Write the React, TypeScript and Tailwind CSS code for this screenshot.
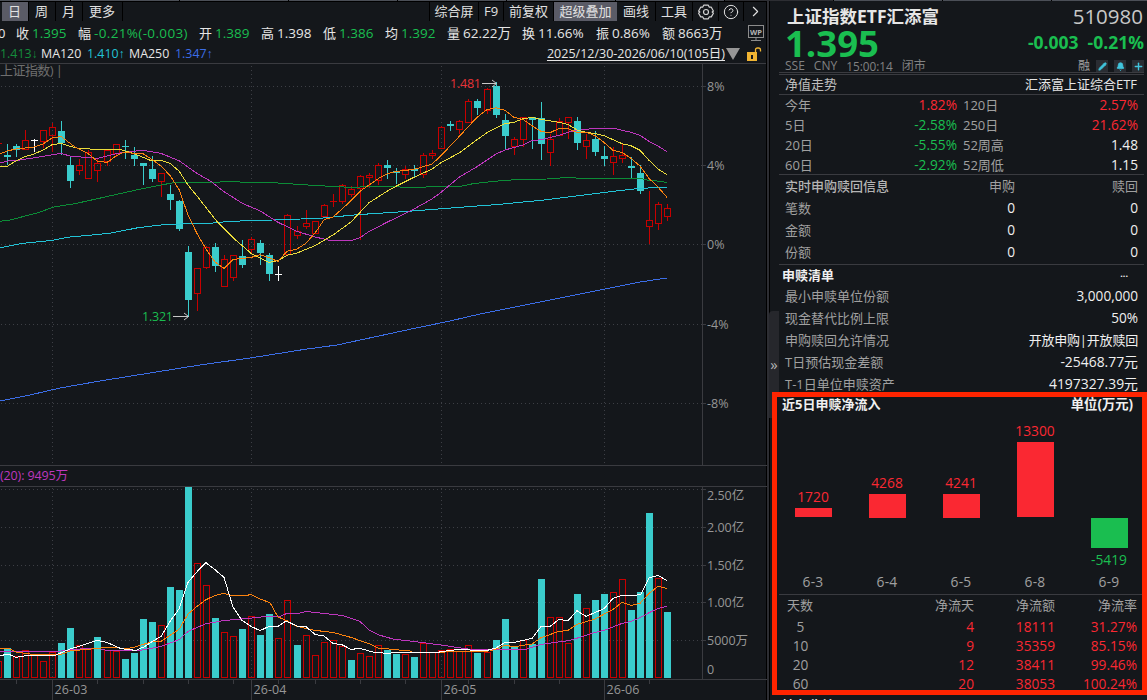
import React from 'react';
import { Bell, ChevronRight, CircleHelp, Pencil, Plus } from 'lucide-react';

type Tone = 'c' | 'r' | 'w';

// [high, body top, body bottom, low, tone, volume top, volume tone]
type Bar = [number, number, number, number, Tone, number, Tone];

const BARS: Bar[] = [
    [144, 155, 157, 165, 'c', 648, 'c'],
    [144, 146, 150, 157, 'c', 656, 'r'],
    [130, 140, 150, 150, 'r', 650, 'r'],
    [139, 140, 141, 152, 'w', 654, 'r'],
    [130, 130, 142, 148, 'r', 661, 'r'],
    [123, 127, 136, 152, 'r', 652, 'r'],
    [121, 131, 143, 155, 'c', 643, 'c'],
    [157, 165, 181, 188, 'c', 628, 'c'],
    [159, 165, 171, 175, 'r', 645, 'r'],
    [150, 152, 179, 179, 'r', 649, 'r'],
    [158, 163, 171, 182, 'r', 637, 'c'],
    [150, 150, 162, 166, 'r', 650, 'r'],
    [144, 144, 154, 157, 'r', 651, 'r'],
    [140, 146, 147, 159, 'c', 659, 'c'],
    [147, 155, 159, 166, 'c', 653, 'c'],
    [163, 163, 166, 185, 'c', 619, 'c'],
    [156, 169, 179, 182, 'c', 622, 'c'],
    [173, 173, 182, 197, 'r', 625, 'r'],
    [185, 194, 200, 210, 'c', 587, 'c'],
    [200, 201, 229, 231, 'c', 590, 'c'],
    [246, 252, 300, 317, 'c', 487, 'c'],
    [268, 268, 294, 311, 'r', 563, 'r'],
    [246, 247, 268, 269, 'r', 585, 'r'],
    [243, 247, 266, 272, 'c', 618, 'c'],
    [255, 259, 287, 287, 'r', 632, 'r'],
    [255, 255, 278, 281, 'r', 636, 'r'],
    [240, 256, 265, 268, 'c', 629, 'c'],
    [237, 239, 250, 254, 'r', 616, 'r'],
    [240, 243, 253, 265, 'c', 635, 'c'],
    [253, 255, 274, 281, 'c', 614, 'c'],
    [266, 274, 275, 281, 'w', 638, 'r'],
    [214, 215, 255, 256, 'r', 600, 'r'],
    [226, 231, 236, 239, 'r', 645, 'c'],
    [210, 223, 227, 229, 'r', 635, 'r'],
    [221, 221, 234, 234, 'r', 655, 'r'],
    [204, 205, 217, 218, 'r', 642, 'r'],
    [194, 201, 202, 207, 'r', 640, 'r'],
    [184, 185, 202, 204, 'r', 646, 'r'],
    [186, 189, 195, 197, 'r', 660, 'c'],
    [175, 176, 189, 240, 'r', 653, 'r'],
    [173, 175, 178, 188, 'r', 656, 'r'],
    [163, 165, 181, 185, 'r', 645, 'r'],
    [160, 165, 168, 179, 'c', 650, 'c'],
    [168, 171, 173, 184, 'c', 654, 'c'],
    [166, 169, 175, 179, 'r', 654, 'r'],
    [165, 169, 171, 177, 'c', 657, 'c'],
    [153, 155, 175, 178, 'r', 643, 'r'],
    [150, 153, 156, 159, 'r', 652, 'r'],
    [126, 127, 149, 149, 'r', 650, 'r'],
    [121, 124, 126, 131, 'c', 649, 'r'],
    [120, 121, 130, 134, 'r', 651, 'r'],
    [99, 101, 123, 123, 'r', 645, 'r'],
    [99, 101, 108, 115, 'c', 653, 'c'],
    [88, 89, 111, 114, 'r', 652, 'r'],
    [82, 86, 115, 118, 'c', 640, 'c'],
    [114, 120, 136, 150, 'c', 619, 'c'],
    [137, 139, 147, 155, 'r', 646, 'c'],
    [117, 117, 140, 147, 'r', 640, 'r'],
    [117, 117, 120, 149, 'c', 644, 'c'],
    [102, 118, 144, 160, 'c', 579, 'c'],
    [134, 139, 153, 166, 'r', 617, 'r'],
    [118, 121, 136, 136, 'r', 617, 'r'],
    [117, 117, 123, 139, 'r', 643, 'r'],
    [117, 121, 143, 150, 'c', 594, 'c'],
    [134, 140, 147, 159, 'r', 608, 'r'],
    [131, 139, 152, 156, 'c', 600, 'c'],
    [146, 156, 159, 166, 'c', 594, 'c'],
    [147, 156, 163, 175, 'r', 592, 'r'],
    [144, 155, 159, 163, 'r', 579, 'r'],
    [157, 166, 168, 178, 'c', 610, 'c'],
    [165, 173, 191, 194, 'c', 592, 'c'],
    [191, 220, 227, 244, 'r', 513, 'c'],
    [202, 204, 224, 230, 'r', 578, 'r'],
    [204, 208, 217, 221, 'r', 612, 'c'],
];

const TONES: Record<Tone, string> = { c: '#3acccc', r: '#c80000', w: '#ffffff' };

// the bar pitch is slightly over 9px, so a pixel is added every 21 bars
const barX = (i: number) => 4 + i * 9 + (i > 10 ? 1 : 0) + (i > 31 ? 1 : 0) + (i > 52 ? 1 : 0);

const LINES = [
    { color: '#3c6ee6', points: '0,401 30,395 60,388 100,381 150,373 200,365 250,358 305,349.3 337,345 410,329.3 450,321 480,314 540,302 600,290 640,282 667,278' },
    { color: '#22c3d6', points: '0,247.7 23,243.3 53,240.3 67,237.3 110,233.3 138,227.7 167,224.3 210,223.3 230,221.3 273,220 320,218.3 357,214.7 403,211.7 447,208.3 500,204.3 547,199.7 580,195.5 610,191.7 640,188.3 667,187.3' },
    { color: '#0c8c37', points: '0,221.3 10,220 37,213 55,206.7 75,203.7 143,188.5 175,182.4 213,182.4 225,181.7 273,182.7 312,185.3 350,187.3 380,186.4 410,187.3 460,186.4 473,183.7 493,181.4 519,179.4 547,179 567,177.5 582,178.4 640,178.4 649,180.4 662,181.4 667,182.7' },
    { color: '#be37be', points: '0,163 8,161 20,160 43,156.4 61,153.4 70,156 97,158.4 116,153.7 125,152 143,150.4 161,153.4 179,160.7 197,173.4 211,181.4 224,191.7 243,203.7 260,210.8 278,222.3 297,231.3 315,237 330,240.4 352,240.4 360,237.7 369,231.4 387,222.3 413,209.5 432,199 441,192.3 459,177.3 477,166.7 496,154 505,150 523,145 532,140.7 541,139.7 559,135.3 568,132.3 577,130.5 592,128.6 615,128.6 631,132.3 640,135.3 649,141.3 658,146 667,151.7' },
    { color: '#ebdc3c', points: '0,166.4 7,166.4 16,161 25,156.7 34,154 43,150 52,144.7 61,143.4 70,146.3 79,148.4 97,149.4 120,149.4 134,153.7 152,161 161,160.4 170,163.4 179,171 188,185 197,196 216,220.3 233,237.7 251,253.3 260,258 269,262.3 278,260.7 287,255.3 297,253 315,245.7 333,235 351,222 369,202.7 387,191.3 396,186.3 414,177.3 432,169 441,162.7 459,153 477,139.7 487,132.7 496,128 505,123.7 514,122.3 523,118.7 532,117.4 541,119.4 559,122.3 568,124.5 577,130 586,132.4 595,133.4 604,135.7 622,143.7 631,145.7 640,150.3 649,160.3 658,169 667,174.7' },
    { color: '#fa820f', points: '0,154 7,151 16,149 34,147 43,144 52,138 61,136.5 75,147 88,153.5 97,161 107,162.4 116,156 124,152 134,153.5 143,153.7 152,159.5 161,166 170,175.5 179,189.5 188,215 197,233.5 206,249 215,262 224,268.4 233,259.5 251,257.5 260,254.7 269,257.7 278,261.4 287,251.3 297,249 306,243.3 316,231.7 324,219.7 333,217 342,209 351,200.7 360,191.3 369,185 380,177.5 387,174 396,171.4 414,169.4 432,164 441,155.7 459,136.7 477,117.3 487,109.7 496,107.7 505,110.4 514,117.3 523,119.4 532,125.7 541,131.4 550,132.7 559,128.4 568,128.5 577,132.6 586,132.2 595,135.7 604,142.4 613,150.3 622,152.4 631,158.4 640,166 649,178.4 658,187 667,197.4' },
    // volume averages
    { color: '#be37be', points: '0,651.4 57,651.4 80,649 98,648.4 107,650.4 137,651 161,646.4 179,639.7 188,631.4 206,623.7 223,620.7 250,618.2 270,616 280,616.4 287,613.4 300,613 306,611.4 342,615.4 360,621.4 369,630 378,634.7 393,639 426,643 446,645.7 470,649.4 526,649.4 541,644.4 570,640.4 595,632.4 606,629.7 622,623.4 631,621.4 640,617.7 649,612.7 658,608.4 667,606.4' },
    { color: '#fa820f', points: '0,648.4 9,648.4 16,652 33,654.4 61,654.4 70,651 97,648.4 107,647.4 127,648.4 134,647.4 143,644.4 152,642 161,641.4 179,629.4 188,614 197,606.4 206,599.7 215,595.4 224,593.4 232,595.4 247,595.4 251,594.4 260,599 270,602.7 278,617 287,620.7 297,626.4 315,630.4 333,632.4 351,637.4 369,643.7 378,648 410,651 413,652.4 443,652.4 447,651.4 490,651 498,648.4 505,645.3 514,646.7 532,644 541,637.7 559,631.4 568,630.4 577,624.4 595,619 613,609.4 622,602.4 631,605.4 640,603.4 649,593.4 658,586.4 667,588.4' },
    { color: '#ffffff', points: '0,655.4 9,654.4 16,657.4 27,655.4 55,655.4 70,649 79,646.4 97,640.4 107,642.4 121,648.7 136,650.4 145,646.4 152,641.7 161,636.4 170,621.4 179,609 188,582.4 197,571.7 206,562.7 215,569.7 224,577.4 233,607 242,620.4 251,626.4 260,630.6 269,626.4 278,626.4 286,621 297,626 306,626.7 315,634.4 324,636 333,643.4 342,644.7 351,649.4 360,648.4 373,652 387,653.4 397,652.4 437,652.4 450,650.4 463,649 473,650.4 487,650.4 496,648 505,642.4 514,642.4 523,640.4 532,638.4 541,626.4 550,626.4 559,619.4 568,620.7 577,610.7 586,616.4 604,608.7 613,598.4 622,595.4 636,595.4 641,594 649,578 658,575.4 667,580.7' },
];

const H_GRID = [86.5, 165.5, 244.5, 324.5, 403.5, 489.5, 527.5, 565.5, 602.5, 640.5];
const MONTHS = [
    { x: 52.5, label: '26-03' },
    { x: 251.5, label: '26-04' },
    { x: 441.5, label: '26-05' },
    { x: 604.5, label: '26-06' },
];
const TICKS = [16.5, 97.5, 143.5, 188.5, 233.5, 278.5, 315.5, 360.5, 405.5, 468.5, 514.5, 559.5, 649.5];
const Y_LABELS: [number, string][] = [
    [91, '8%'],
    [170, '4%'],
    [249, '0%'],
    [329, '-4%'],
    [408, '-8%'],
    [500, '2.50亿'],
    [532, '2.00亿'],
    [570, '1.50亿'],
    [607, '1.00亿'],
    [645, '5000万'],
    [674, '0'],
];

const Chart: React.FC = () => (
    <svg width="767" height="636" viewBox="0 64 767 636" className="block text-[12.5px]">
        <g stroke="#3d3f45" strokeDasharray="1 3" shapeRendering="crispEdges">
            {H_GRID.map((y) => (
                <line key={y} x1="1" x2="702" y1={y} y2={y} />
            ))}
            {MONTHS.map((m) => (
                <React.Fragment key={m.x}>
                    <line x1={m.x} x2={m.x} y1="66" y2="465" />
                    <line x1={m.x} x2={m.x} y1="488" y2="679" />
                </React.Fragment>
            ))}
        </g>
        <g stroke="#3a3b40" shapeRendering="crispEdges">
            <path d="M0 465.5H767M0 486.5H767M0 679.5H767M702.5 64V465M702.5 487V679" />
            {H_GRID.map((y) => (
                <line key={y} x1="702" x2="706" y1={y} y2={y} />
            ))}
            {MONTHS.map((m) => (
                <line key={m.x} x1={m.x} x2={m.x} y1="680" y2="700" />
            ))}
            {TICKS.map((x) => (
                <line key={x} x1={x} x2={x} y1="680" y2="684" />
            ))}
        </g>

        <g shapeRendering="crispEdges">
            <rect x="-5.5" y="661.5" width="7" height="16" fill="none" stroke="#c80000" />
            <rect x="0" y="143" width="2" height="1" fill="#c80000" />
            {BARS.map(([hi, top, bottom, lo, tone, vol, volTone], i) => {
                const x = barX(i);
                const hollow = tone === 'r' && bottom - top > 1;
                return (
                    <g key={i}>
                        {hollow ? (
                            <>
                                <rect x={x + 3} y={hi} width="1" height={top - hi} fill={TONES.r} />
                                <rect x={x + 3} y={bottom} width="1" height={lo - bottom} fill={TONES.r} />
                                <rect x={x + 0.5} y={top + 0.5} width="6" height={bottom - top - 1} fill="none" stroke={TONES.r} />
                            </>
                        ) : (
                            <>
                                <rect x={x + 3} y={hi} width="1" height={lo - hi} fill={TONES[tone]} />
                                <rect x={x} y={top} width="7" height={bottom - top} fill={TONES[tone]} />
                            </>
                        )}
                        {volTone === 'c' ? (
                            <rect x={x} y={vol} width="7" height={678 - vol} fill={TONES.c} />
                        ) : (
                            <rect x={x + 0.5} y={vol + 0.5} width="6" height={677 - vol} fill="none" stroke={TONES.r} />
                        )}
                    </g>
                );
            })}
            {LINES.map((line, i) => (
                <polyline key={i} points={line.points} fill="none" stroke={line.color} strokeWidth="1" />
            ))}
        </g>

        <path d="M173 316.5H188M184 313L188.5 316.5L184 320M482 83.5H496M492 80L496.5 83.5L492 87" fill="none" stroke="#c8c8c8" />
        <text x="142" y="321" textLength="31" fill="#1abe50">1.321</text>
        <text x="450" y="88" textLength="31" fill="#e63237">1.481</text>

        <rect x="0" y="64" width="66" height="13" fill="#14171b" />
        <text x="0" y="75" textLength="63" fontSize="13" fill="#6e6e6e">上证指数) |</text>
        <text x="0" y="480" textLength="68" fill="#be37be">(20): 9495万</text>
        {Y_LABELS.map(([y, label]) => (
            <text key={label} x="707" y={y} fill="#969696">{label}</text>
        ))}
        {MONTHS.map((m) => (
            <text key={m.x} x={m.x + 2} y="694" textLength="33" fill="#969696">{m.label}</text>
        ))}
    </svg>
);

const GearIcon: React.FC = () => (
    <svg width="16" height="16" viewBox="0 0 16 16" fill="none" stroke="#d2d2d2" strokeWidth="1.2" strokeLinejoin="round">
        <path d="M5.7 1.2H10.3L11.2 3.1L13.3 3.2L15.4 7L14.2 8L15.4 9.2L13.3 12.9L11.2 12.9L10.3 14.8H5.7L4.8 12.9L2.7 12.9L.6 9.2L1.8 8L.6 7L2.7 3.2L4.8 3.1Z" />
        <circle cx="8" cy="8" r="2.5" />
    </svg>
);

const Toolbar: React.FC = () => (
    <div className="flex h-[21px] justify-between border-t border-black pb-px leading-[19px] text-[#e1e1e1]">
        <div className="flex pl-[2px]">
            <span className="w-[27px] border-r border-black bg-[#5a5b66] pl-[6px]">日</span>
            <span className="w-[27px] border-r border-black pl-[6px]">周</span>
            <span className="w-[27px] border-r border-black pl-[6px]">月</span>
            <span className="w-[40px] border-r border-black pl-[6px]">更多</span>
        </div>
        <div className="flex text-center">
            <span className="w-[50px] border-x border-black">综合屏</span>
            <span className="w-[25px] border-r border-black">F9</span>
            <span className="w-[50px] border-r border-black">前复权</span>
            <span className="w-[63px] bg-[#5a5b66]">超级叠加</span>
            <span className="w-[39px] border-r border-black">画线</span>
            <span className="w-[37px] border-r border-black">工具</span>
            <span className="flex w-[26px] items-center justify-center border-r border-black"><GearIcon /></span>
            <span className="flex w-[25px] items-center justify-center border-r border-black">
                <CircleHelp size={16} strokeWidth={1.5} />
            </span>
            <span className="flex w-[22px] items-center justify-center">
                <ChevronRight size={17} strokeWidth={1.6} />
            </span>
        </div>
    </div>
);

const QUOTES = [
    { label: '收', value: '1.395', width: 'w-[62px]', color: 'text-[#1abe50]' },
    { label: '幅', value: '-0.21%(-0.003)', width: 'w-[121px]', color: 'text-[#1abe50] tracking-[0.35px]' },
    { label: '开', value: '1.389', width: 'w-[62px]', color: 'text-[#1abe50]' },
    { label: '高', value: '1.398', width: 'w-[62px]', color: '' },
    { label: '低', value: '1.386', width: 'w-[62px]', color: 'text-[#1abe50]' },
    { label: '均', value: '1.392', width: 'w-[62px]', color: 'text-[#1abe50]' },
    { label: '量', value: '62.22万', width: 'w-[75px]', color: '' },
    { label: '换', value: '11.66%', width: 'w-[74px]', color: '' },
    { label: '振', value: '0.86%', width: 'w-[66px]', color: '' },
    { label: '额', value: '8663万', width: 'w-[70px]', color: '' },
];

const QuoteRow: React.FC = () => (
    <div className="flex h-[22px] items-center pt-px whitespace-nowrap text-[#e6e6e6]">
        <span className="w-[16px] shrink-0 -indent-[2px]">0</span>
        {QUOTES.map((q) => (
            <div key={q.label} className={`flex shrink-0 items-center gap-[3px] ${q.width}`}>
                <span>{q.label}</span>
                <span className={`text-[13.5px] ${q.color}`}>{q.value}</span>
            </div>
        ))}
        <svg width="17" height="17" viewBox="0 0 17 17" className="ml-4 shrink-0" fill="none" stroke="#8c8c8c">
            <rect x="0.5" y="0.5" width="15" height="12" />
            <path d="M8 13V15M3 15.5H13" />
            <text x="2" y="9.5" textLength="12" fontSize="7.5" fontWeight="700" fill="#b4b4b4" stroke="none">WP</text>
        </svg>
    </div>
);

const Arrow: React.FC<{ children: string }> = ({ children }) => (
    <span className="font-['Liberation_Sans',sans-serif] text-[12px]">{children}</span>
);

const AverageRow: React.FC = () => (
    <div className="flex h-[20px] items-center justify-between border-b border-[#3a3b40] pt-px pr-[4px] text-[12.4px] whitespace-nowrap">
        <div className="flex">
            <span className="w-[41px] text-[#148c3c]">1.413<Arrow>↓</Arrow></span>
            <span className="w-[46px] text-[#e6e6e6]">MA120</span>
            <span className="w-[42px] text-[#22c3d6]">1.410<Arrow>↑</Arrow></span>
            <span className="w-[46px] text-[#e6e6e6]">MA250</span>
            <span className="text-[#3c6ee6]">1.347<Arrow>↑</Arrow></span>
        </div>
        <div className="flex items-center">
            <span className="text-[12.5px] text-[#e6e6e6] underline underline-offset-2">2025/12/30-2026/06/10(105日)</span>
            <svg width="15" height="12" viewBox="0 0 15 12" fill="#969696">
                <path d="M1 0H15L8 12Z" />
            </svg>
            <svg width="16" height="15" viewBox="0 0 16 15" className="ml-[6px]">
                <rect x="1" y="5" width="10" height="9" fill="#f0b432" />
                <path d="M9.5 5V3Q9.5 1 11.5 1H12.5Q14.5 1 14.5 3V4.5" fill="none" stroke="#f0b432" strokeWidth="1.3" />
                <rect x="5" y="8" width="2" height="4" fill="#14171b" />
            </svg>
        </div>
    </div>
);

const PERFORMANCE = [
    ['今年', '1.82%', '120日', '2.57%'],
    ['5日', '-2.58%', '250日', '21.62%'],
    ['20日', '-5.55%', '52周高', '1.48'],
    ['60日', '-2.92%', '52周低', '1.15'],
];

const valueColor = (value: string) => {
    if (!value.endsWith('%')) return 'text-[#f0f0f0]';
    return value.startsWith('-') ? 'text-[#1abe50]' : 'text-[#fa2832]';
};

const LIST = [
    { label: '最小申赎单位份额', value: '3,000,000', size: 'text-[13.6px]' },
    { label: '现金替代比例上限', value: '50%', size: 'text-[13.6px]' },
    { label: '申购赎回允许情况', value: '开放申购|开放赎回', size: 'text-[13px] tracking-[-0.2px]' },
    { label: 'T日预估现金差额', value: '-25468.77元', size: 'text-[13.9px]' },
    { label: 'T-1日单位申赎资产', value: '4197327.39元', size: 'text-[13.9px]' },
];

const SecurityHeader: React.FC = () => (
    <div className="h-[70px] border-b border-[#3a3b40] pl-[6px]">
        <div className="flex h-[26px] items-center justify-between pr-px pl-[2px]">
            <span className="text-[17.5px] font-bold text-[#e6e6e6]">上证指数ETF汇添富</span>
            <span className="text-[20.5px] text-[#c8c8c8]">510980</span>
        </div>
        <div className="flex h-[29px] items-start justify-between text-[#1abe50]">
            <span className="text-[36.5px] leading-[28px] font-bold">1.395</span>
            <span className="flex gap-[9px] text-[17.5px] leading-[26px] font-bold">
                <span>-0.003</span>
                <span>-0.21%</span>
            </span>
        </div>
        <div className="flex h-[15px] items-center justify-between pt-px text-xs leading-[14px] text-[#828282]">
            <div className="flex gap-[9px]">
                <span>SSE</span>
                <span>CNY</span>
                <span className="text-[11.8px]">15:00:14</span>
                <span>闭市</span>
            </div>
            <div className="flex items-center gap-[6px] text-[#40c4dc]">
                <span className="text-[#a0a0a0]">融</span>
                <span className="flex size-3 items-center justify-center bg-[#2a2d33]"><Pencil size={9} fill="currentColor" /></span>
                <span className="flex size-3 items-center justify-center bg-[#2a2d33]"><Bell size={9} fill="currentColor" /></span>
                <span className="flex size-3 items-center justify-center bg-[#2a2d33]"><Plus size={11} strokeWidth={3} /></span>
            </div>
        </div>
    </div>
);

const FLOWS = [
    { date: '6-3', value: 1720, top: 'pt-[76px]', height: 'h-[9px]' },
    { date: '6-4', value: 4268, top: 'pt-[62px]', height: 'h-[24px]' },
    { date: '6-5', value: 4241, top: 'pt-[62px]', height: 'h-[24px]' },
    { date: '6-8', value: 13300, top: 'pt-[10px]', height: 'h-[75px]' },
    { date: '6-9', value: -5419, top: 'pt-[105px]', height: 'h-[30px]' },
];

const FLOW_TABLE = [
    ['5', '4', '18111', '31.27%'],
    ['10', '9', '35359', '85.15%'],
    ['20', '12', '38411', '99.46%'],
    ['60', '20', '38053', '100.24%'],
];

const NetFlow: React.FC = () => (
    <section className="relative -ml-[7px] h-[303px] w-[375px] shrink-0 border-[5px] border-[#ff2400] bg-[#14171b]">
        <div className="flex h-[16px] items-center justify-between pr-[9px] pl-[5px] font-bold text-[#f0f0f0]">
            <span>近5日申赎净流入</span>
            <span className="text-[13.3px]">单位(万元)</span>
        </div>
        <div className="flex h-[161px] gap-[16px] pl-[7px]">
            {FLOWS.map((f) => (
                <div key={f.date} className={`flex w-[58px] flex-col items-center text-[13.8px] leading-[16px] ${f.top}`}>
                    {f.value > 0 && <span className="mb-[3px] text-[#fa2832]">{f.value}</span>}
                    <div className={`w-[37px] shrink-0 ${f.height} ${f.value > 0 ? 'bg-[#fa2832]' : 'bg-[#1abe50]'}`} />
                    {f.value < 0 && <span className="mt-[4px] text-[#1abe50]">{f.value}</span>}
                </div>
            ))}
        </div>
        <div className="ml-[2px] flex h-[21px] gap-[16px] border-b border-[#3a3b40] pl-[5px] text-[13.8px] leading-[16px] tracking-[0.3px] text-[#a0a0a0]">
            {FLOWS.map((f) => (
                <span key={f.date} className="w-[58px] text-center">{f.date}</span>
            ))}
        </div>
        <div className="grid h-[22px] grid-cols-[27px_160px_81px_82px] pl-[10px] text-right leading-[21px] whitespace-nowrap text-[#a0a0a0]">
            <span className="text-left">天数</span>
            <span>净流天</span>
            <span>净流额</span>
            <span>净流率</span>
        </div>
        {FLOW_TABLE.map(([days, count, amount, rate]) => (
            <div key={days} className="grid grid-cols-[27px_160px_81px_82px] pl-[10px] text-right text-[13.7px] leading-[19px] text-[#fa2832]">
                <span className="text-center text-[#a0a0a0]">{days}</span>
                <span>{count}</span>
                <span>{amount}</span>
                <span>{rate}</span>
            </div>
        ))}
    </section>
);

const SidePanel: React.FC = () => (
    <div className="relative flex w-[368px] shrink-0 flex-col pt-[2px] text-[#a0a0a0]">
        <div className="w-[365px] shrink-0">
            <SecurityHeader />
            <div className="mt-px flex h-[21px] items-center justify-between border-y border-[#3a3b40] pt-px pr-[7px] pl-[6px]">
                <span className="text-[#bebebe]">净值走势</span>
                <span className="text-[#e6e6e6]">汇添富上证综合ETF</span>
            </div>
            <div className="h-[80px] border-b border-[#3a3b40] pr-[6px] pl-[6px] leading-5">
                {PERFORMANCE.map(([a, av, b, bv]) => (
                    <div key={a} className="flex h-5">
                        <span className="w-[82px]">{a}</span>
                        <span className={`w-[90px] text-right text-[13.7px] ${valueColor(av)}`}>{av}</span>
                        <span className="pl-[6px]">{b}</span>
                        <span className={`flex-1 text-right text-[13.7px] ${valueColor(bv)}`}>{bv}</span>
                    </div>
                ))}
            </div>
            <div className="h-[90px] border-b border-[#3a3b40] pr-[6px] pl-[6px] leading-[22px]">
                <div className="flex h-[22px]">
                    <span className="w-[130px] font-medium text-[#b4b4b4]">实时申购赎回信息</span>
                    <span className="w-[100px] text-right">申购</span>
                    <span className="flex-1 text-right">赎回</span>
                </div>
                {['笔数', '金额', '份额'].map((label) => (
                    <div key={label} className="flex h-[22px]">
                        <span className="w-[130px]">{label}</span>
                        <span className="w-[100px] text-right text-[13.7px] text-[#f0f0f0]">0</span>
                        <span className="flex-1 text-right text-[13.7px] text-[#f0f0f0]">0</span>
                    </div>
                ))}
            </div>
            <div className="flex h-[21px] items-center justify-between pr-[16px] pl-[3px] font-bold text-[#f0f0f0]">
                <span>申赎清单</span>
                <span className="text-[9px]">···</span>
            </div>
            <div className="h-[106px] pr-[6px] pl-[6px] leading-[20px]">
                {LIST.map((row) => (
                    <div key={row.label} className="flex h-[22px] justify-between">
                        <span>{row.label}</span>
                        <span className={`text-[#f0f0f0] ${row.size}`}>{row.value}</span>
                    </div>
                ))}
            </div>
        </div>
        <NetFlow />
        <div className="mt-[2px] pl-[3px] font-bold leading-[16px] text-[#f0f0f0]">持有收益</div>
    </div>
);

const App: React.FC = () => {
    return (
        <div className="flex h-[700px] w-[1147px] flex-col overflow-hidden bg-[#14171b] font-['Open_Sans','Noto_Sans_CJK_SC',sans-serif] text-[13px]">
            <div className="flex h-px shrink-0 gap-px bg-black">
                <div className="w-[70px] bg-[#4b4f57]" />
                <div className="w-[108px] bg-[#4b4f57]" />
                <div className="w-[108px] bg-[#4b4f57]" />
                <div className="w-[108px] bg-[#4b4f57]" />
                <div className="w-[108px] bg-[#4b4f57]" />
                <div className="w-[108px] bg-[#4b4f57]" />
                <div className="w-[108px] bg-[#4b4f57]" />
                <div className="w-[108px] bg-[#2d2e33]" />
                <div className="w-[108px] bg-[#4b4f57]" />
                <div className="w-[108px] bg-[#4b4f57]" />
                <div className="flex-1 bg-[#4b4f57]" />
            </div>
            <div className="flex h-[699px]">
                <div className="flex w-[767px] shrink-0 flex-col border-r border-black">
                    <Toolbar />
                    <QuoteRow />
                    <AverageRow />
                    <Chart />
                </div>
                <div className="flex w-[12px] shrink-0 flex-col border-l-2 border-[#2d2e33] pt-[310px] shadow-[inset_1px_0_0_#000]">
                    <div className="flex h-[107px] items-center justify-center rounded-tl bg-[#26272c] text-[15px] text-[#b4b4b4]">»</div>
                </div>
                <SidePanel />
            </div>
        </div>
    );
};

export default App;
